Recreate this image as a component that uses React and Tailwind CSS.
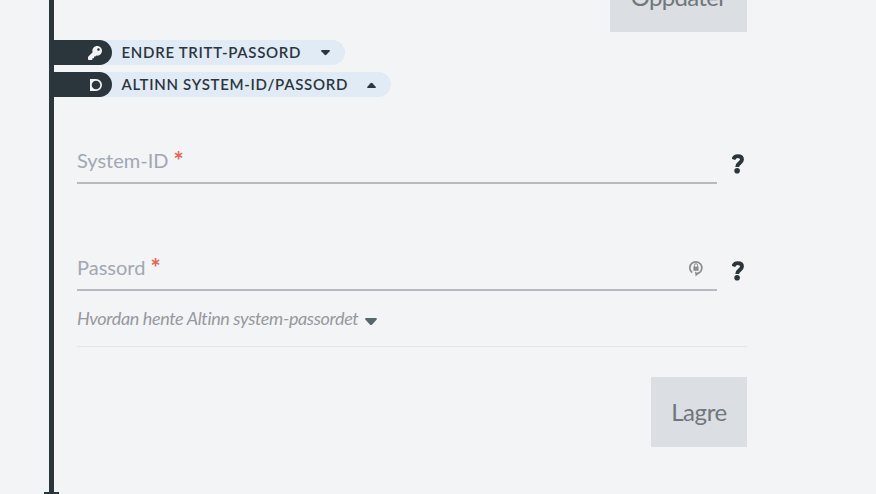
import React from "react";
import { FaKey } from "react-icons/fa";

const AltinnIcon = () => (
  <svg width="12" height="12" viewBox="0 0 12 12" fill="none">
    <path
      d="M0 0H6A6 6 0 0 1 6 12H0ZM6 1.7A4.2 4.2 0 1 0 6 10.3A4.2 4.2 0 1 0 6 1.7Z"
      fill="#f3f4f6"
      fillRule="evenodd"
    />
  </svg>
);

const QuestionIcon = ({ className }) => (
  <svg viewBox="0 0 12 20" className={className} fill="none">
    <path
      d="M1.4 5.4C2 3.2 3.6 2.1 5.8 2.1C8.4 2.1 10 3.4 10 5.6C10 9 5.4 8.8 5.2 13"
      stroke="currentColor"
      strokeWidth="3.9"
    />
    <circle cx="5.1" cy="16.8" r="2.8" fill="currentColor" />
  </svg>
);

const PasswordManagerIcon = () => (
  <svg width="14" height="17" viewBox="0 0 14 17" fill="none">
    <path
      d="M3.2 12.6A6 6 0 1 1 10 12.9L7.2 14"
      stroke="#8b8b8b"
      strokeWidth="1.7"
    />
    <path d="M6 11.4L9.6 13.8L6.6 16.6Z" fill="#8b8b8b" />
    <rect x="4.4" y="6.6" width="5.2" height="4.2" fill="#8b8b8b" />
    <path d="M5.4 7V5.3A1.6 1.6 0 0 1 8.6 5.3V7" stroke="#8b8b8b" />
  </svg>
);

const Caret = ({ up, className }) => (
  <svg
    viewBox="0 0 12 8"
    className={`${className} ${up ? "rotate-180" : ""}`}
    fill="currentColor"
    preserveAspectRatio="none"
  >
    <path d="M1 0H11Q12.4 0.4 11.5 1.7L7.2 6.4Q6 7.6 4.8 6.4L0.5 1.7Q-0.4 0.4 1 0Z" />
  </svg>
);

const SectionHeader = ({ icon, title, open, className }) => (
  <button
    className={`flex h-[25px] items-center rounded-r-full bg-[#e1ebf5] text-[#2a363c] ${className}`}
  >
    <span className="flex h-full w-[58px] items-center justify-end rounded-r-full bg-[#2a363c] pr-[10px] text-[#f3f4f6]">
      {icon}
    </span>
    <span className="ml-[9.5px] text-[15px] font-semibold leading-[25px] tracking-[0.7px] whitespace-nowrap">
      {title}
    </span>
    <Caret up={open} className="ml-auto mr-[15px] h-[6px] w-[9px]" />
  </button>
);

const Field = ({ label, icon }) => (
  <div className="flex h-[40px] items-start">
    <div className="flex h-full w-[640px] items-start justify-between border-b-2 border-[#b7b9c0]">
      <label className="flex text-[20px] leading-[32px] text-[#a1a7b3]">
        {label}
        <span className="ml-[5px] mt-px text-[24px] font-bold text-[#ee6054]">
          *
        </span>
      </label>
      {icon && <span className="mr-[14px] mt-[9px]">{icon}</span>}
    </div>
    <QuestionIcon className="ml-[15px] mt-[10px] h-[20px] w-[12px] text-[#2a363c]" />
  </div>
);

const App = () => {
  return (
    <div className="flex h-[494px] w-[876px] overflow-hidden bg-[#f3f4f6] font-['Lato',sans-serif]">
      <div className="flex w-[59px] shrink-0 flex-col items-center pl-[44px]">
        <div className="h-[492px] w-[5px] bg-[#2a363c]"></div>
        <div className="h-[2px] w-[15px] bg-[#2a363c]"></div>
      </div>
      <div className="-ml-[5px] w-[693px]">
        <div className="flex h-[32px] items-end justify-end">
          <button className="h-[70px] w-[137px] shrink-0 bg-[#dbdee3] text-[24px] tracking-[-0.7px] text-[#6f777b]">
            Oppdater
          </button>
        </div>
        <div className="mt-2 flex flex-col gap-[7px]">
          <SectionHeader
            icon={<FaKey className="h-[14px] w-[14px]" />}
            title="ENDRE TRITT-PASSORD"
            className="w-[291px]"
          />
          <SectionHeader
            icon={<AltinnIcon />}
            title="ALTINN SYSTEM-ID/PASSORD"
            open
            className="w-[337px]"
          />
        </div>
        <div className="ml-[23px] mt-[47px]">
          <Field label="System-ID" />
          <div className="mt-[67px]">
            <Field label="Passord" icon={<PasswordManagerIcon />} />
          </div>
          <div className="flex h-[56px] items-center border-b border-[#e3e5e8] text-[18px] italic tracking-[-0.36px] text-[#96999d]">
            <span>Hvordan hente Altinn system-passordet</span>
            <Caret className="ml-[7px] mt-[6px] h-[8px] w-[12px] text-[#57686d]" />
          </div>
          <div className="mt-[30px] flex justify-end">
            <button className="h-[70px] w-[96px] bg-[#dbdee3] text-[24px] tracking-[-0.4px] text-[#6f777b]">
              Lagre
            </button>
          </div>
        </div>
      </div>
    </div>
  );
};

export default App;
